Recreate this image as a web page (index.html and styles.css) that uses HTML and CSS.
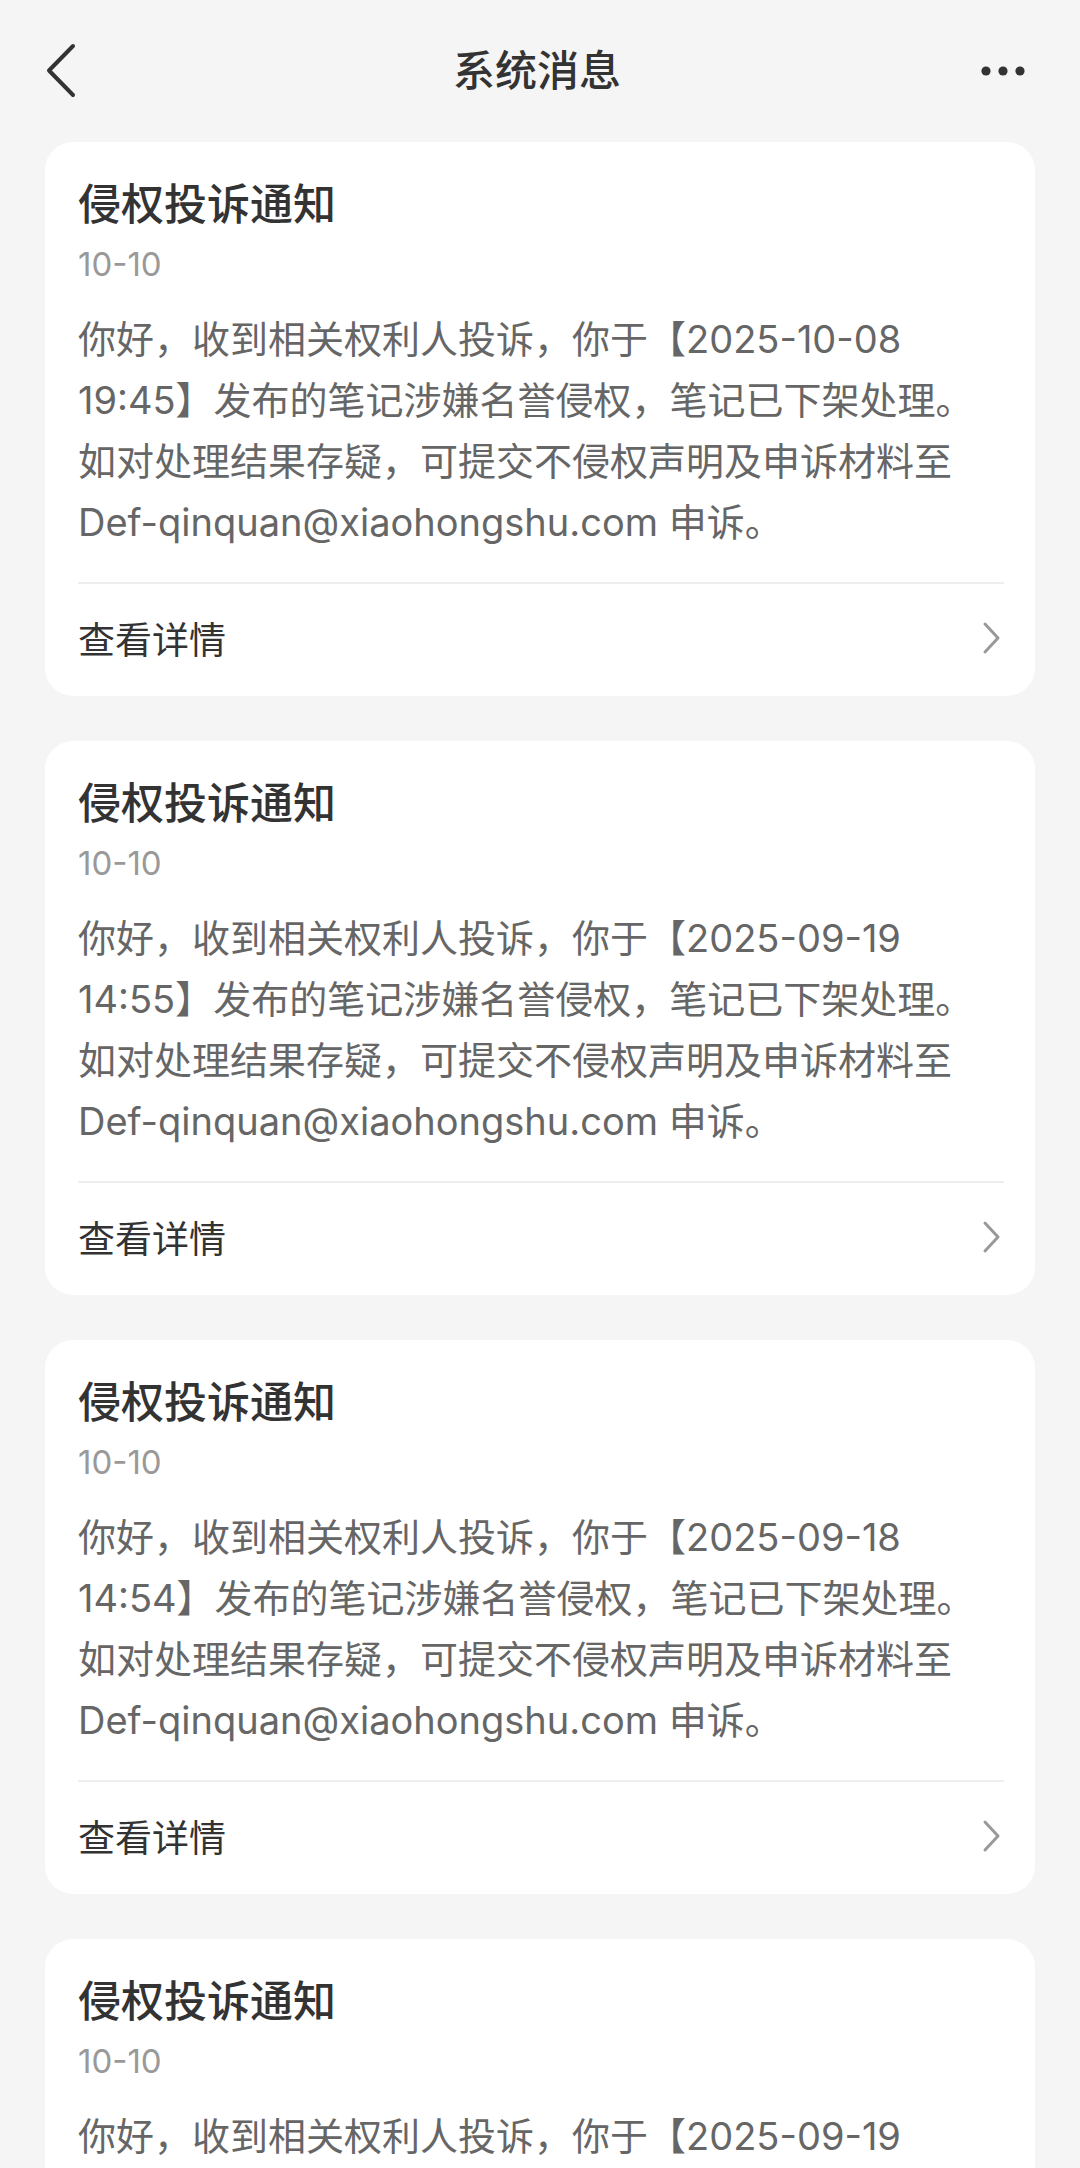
FILE: index.html
```html
<!DOCTYPE html>
<html lang="zh-CN">
<head>
    <meta charset="UTF-8">
    <meta name="viewport" content="width=device-width, initial-scale=1.0">
    <title>系统消息</title>
    <link rel="stylesheet" href="styles.css">
</head>
<body>
    <header class="nav">
        <div class="nav-back">
            <svg width="34" height="56" viewBox="0 0 34 56">
                <path d="M29 3 L5 27.5 L29 52" fill="none" stroke="#333" stroke-width="4" stroke-linecap="round" stroke-linejoin="round"/>
            </svg>
        </div>
        <h1 class="nav-title">系统消息</h1>
        <div class="nav-more">
            <svg width="52" height="16" viewBox="0 0 52 16">
                <circle cx="8" cy="8" r="4.6" fill="#333"/>
                <circle cx="25" cy="8" r="4.6" fill="#333"/>
                <circle cx="42" cy="8" r="4.6" fill="#333"/>
            </svg>
        </div>
    </header>

    <main class="list">
        <div class="card">
            <div class="card-title">侵权投诉通知</div>
            <div class="card-date">10-10</div>
            <p class="card-text">你好，收到相关权利人投诉，你于【2025-10-08<br>19:45】发布的笔记涉嫌名誉侵权，笔记已下架处理。<br>如对处理结果存疑，可提交不侵权声明及申诉材料至<br>Def-qinquan@xiaohongshu.com 申诉。</p>
            <div class="card-foot">
                <span>查看详情</span>
                <svg class="arrow" width="20" height="34" viewBox="0 0 20 34">
                    <path d="M3 3 L16 17 L3 31" fill="none" stroke="#999" stroke-width="3" stroke-linecap="round" stroke-linejoin="round"/>
                </svg>
            </div>
        </div>

        <div class="card">
            <div class="card-title">侵权投诉通知</div>
            <div class="card-date">10-10</div>
            <p class="card-text">你好，收到相关权利人投诉，你于【2025-09-19<br>14:55】发布的笔记涉嫌名誉侵权，笔记已下架处理。<br>如对处理结果存疑，可提交不侵权声明及申诉材料至<br>Def-qinquan@xiaohongshu.com 申诉。</p>
            <div class="card-foot">
                <span>查看详情</span>
                <svg class="arrow" width="20" height="34" viewBox="0 0 20 34">
                    <path d="M3 3 L16 17 L3 31" fill="none" stroke="#999" stroke-width="3" stroke-linecap="round" stroke-linejoin="round"/>
                </svg>
            </div>
        </div>

        <div class="card">
            <div class="card-title">侵权投诉通知</div>
            <div class="card-date">10-10</div>
            <p class="card-text">你好，收到相关权利人投诉，你于【2025-09-18<br>14:54】发布的笔记涉嫌名誉侵权，笔记已下架处理。<br>如对处理结果存疑，可提交不侵权声明及申诉材料至<br>Def-qinquan@xiaohongshu.com 申诉。</p>
            <div class="card-foot">
                <span>查看详情</span>
                <svg class="arrow" width="20" height="34" viewBox="0 0 20 34">
                    <path d="M3 3 L16 17 L3 31" fill="none" stroke="#999" stroke-width="3" stroke-linecap="round" stroke-linejoin="round"/>
                </svg>
            </div>
        </div>

        <div class="card">
            <div class="card-title">侵权投诉通知</div>
            <div class="card-date">10-10</div>
            <p class="card-text">你好，收到相关权利人投诉，你于【2025-09-19<br>14:55】发布的笔记涉嫌名誉侵权，笔记已下架处理。<br>如对处理结果存疑，可提交不侵权声明及申诉材料至<br>Def-qinquan@xiaohongshu.com 申诉。</p>
            <div class="card-foot">
                <span>查看详情</span>
                <svg class="arrow" width="20" height="34" viewBox="0 0 20 34">
                    <path d="M3 3 L16 17 L3 31" fill="none" stroke="#999" stroke-width="3" stroke-linecap="round" stroke-linejoin="round"/>
                </svg>
            </div>
        </div>
    </main>
</body>
</html>
```

FILE: styles.css
```css
body {
    margin: 0;
    background-color: #f5f5f5;
    font-family: Inter, "Noto Sans CJK SC", sans-serif;
    color: #333;
}

.nav {
    height: 142px;
    display: grid;
    grid-template-columns: 1fr auto 1fr;
    align-items: center;
    padding: 0 50px 0 44px;
}

.nav-back svg,
.nav-more svg {
    display: block;
}

.nav-more {
    justify-self: end;
}

.nav-title {
    margin: 0;
    font-size: 42px;
    font-weight: 500;
    line-height: 56px;
    color: #333;
}

.list {
    display: flex;
    flex-direction: column;
    gap: 45px;
    padding: 0 45px 45px;
}

.card {
    background: white;
    border-radius: 28px;
    padding: 33px 31px 0 33px;
}

.card-title {
    font-size: 43px;
    font-weight: 500;
    line-height: 58px;
    color: #333;
}

.card-date {
    margin-top: 8px;
    font-size: 33px;
    line-height: 46px;
    color: #999;
}

.card-text {
    margin: 22px 0 0;
    font-size: 38px;
    line-height: 61px;
    color: #666;
}

.card-foot {
    margin-top: 29px;
    height: 107px;
    padding-bottom: 5px;
    border-top: 2px solid #eeeeee;
    display: flex;
    align-items: center;
    justify-content: space-between;
    font-size: 37px;
    color: #333;
}

.arrow {
    display: block;
    margin-right: 2px;
}
```
